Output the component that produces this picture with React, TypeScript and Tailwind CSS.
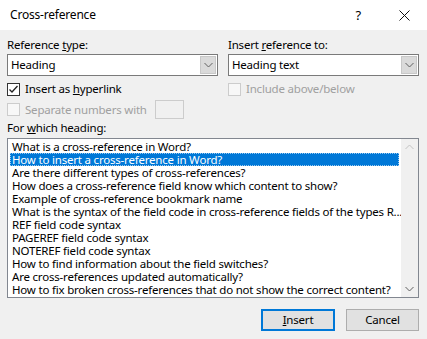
import React from 'react';

const headings = [
  'What is a cross-reference in Word?',
  'How to insert a cross-reference in Word?',
  'Are there different types of cross-references?',
  'How does a cross-reference field know which content to show?',
  'Example of cross-reference bookmark name',
  'What is the syntax of the field code in cross-reference fields of the types R...',
  'REF field code syntax',
  'PAGEREF field code syntax',
  'NOTEREF field code syntax',
  'How to find information about the field switches?',
  'Are cross-references updated automatically?',
  'How to fix broken cross-references that do not show the correct content?',
];

const selectedIndex = 1;

// small grey chevron used by combos and the scrollbar
const Chevron: React.FC<{ up?: boolean }> = ({ up }) => (
  <svg width="9" height="6" viewBox="0 0 9 6" className="block">
    <polyline
      points={up ? '0.5,5 4.5,1 8.5,5' : '0.5,1 4.5,5 8.5,1'}
      fill="none"
      stroke={up ? '#c2c2c2' : '#606060'}
      strokeWidth="1"
    />
  </svg>
);

const Combo: React.FC<{ value: string }> = ({ value }) => (
  <div className="flex h-[22px] items-stretch border border-[#7a7a7a] bg-white">
    <div className="flex flex-1 items-center pl-[3px] text-black">{value}</div>
    <div className="m-[1px] flex w-[16px] items-center justify-center bg-[#dadada] border border-[#c8c8c8]">
      <Chevron />
    </div>
  </div>
);

const CheckBox: React.FC<{ checked?: boolean; disabled?: boolean }> = ({ checked, disabled }) => (
  <div
    className={
      disabled
        ? 'h-[13px] w-[13px] shrink-0 border border-[#cccccc] bg-[#f7f7f7]'
        : 'h-[13px] w-[13px] shrink-0 border border-[#333333] bg-white'
    }
  >
    {checked && (
      <svg width="11" height="11" viewBox="0 0 11 11" className="block">
        <polyline points="1.5,5.5 4,8 9.5,2" fill="none" stroke="#222" strokeWidth="1.3" />
      </svg>
    )}
  </div>
);

export default function App() {
  return (
    <div
      className="flex h-[339px] w-[427px] flex-col bg-[#f0f0f0] text-[11.5px] leading-[14px] tracking-[-0.2px] text-black"
      style={{ fontFamily: '"Segoe UI", "Noto Sans", sans-serif' }}
    >
      {/* title bar */}
      <div className="flex h-[30px] items-center bg-white pl-[10px]">
        <span className="flex-1 text-[12px]">Cross-reference</span>
        <span className="mr-[38px] text-[13px]">?</span>
        <svg width="11" height="11" viewBox="0 0 11 11" className="mr-[17px]">
          <path d="M0.5 0.5 L10.5 10.5 M10.5 0.5 L0.5 10.5" stroke="#111" strokeWidth="1" />
        </svg>
      </div>

      <div className="flex flex-1 flex-col pl-[7px] pr-[8px]">
        {/* top row: two columns */}
        <div className="mt-[8px] flex gap-[10px]">
          <div className="flex w-[211px] flex-col">
            <div className="mb-[2px]">
              Reference <u>t</u>ype:
            </div>
            <Combo value="Heading" />
            <div className="mt-[6px] flex items-center gap-[5px]">
              <CheckBox checked />
              <span>
                Insert as <u>h</u>yperlink
              </span>
            </div>
            <div className="mt-[4px] flex h-[19px] items-center gap-[5px]">
              <CheckBox disabled />
              <span className="text-[#a0a0a0]">Separate numbers with</span>
              <div className="ml-[3px] h-[19px] w-[29px] border border-[#cccccc] bg-[#f0f0f0]" />
            </div>
          </div>
          <div className="flex flex-1 flex-col">
            <div className="mb-[2px]">
              Insert <u>r</u>eference to:
            </div>
            <Combo value="Heading text" />
            <div className="mt-[6px] flex items-center gap-[5px]">
              <CheckBox disabled />
              <span className="text-[#a0a0a0]">Include above/below</span>
            </div>
          </div>
        </div>

        <div className="mt-[2px] mb-[3px]">
          For <u>w</u>hich heading:
        </div>

        {/* list box */}
        <div className="flex h-[160px] border border-[#828790] bg-white">
          <div className="flex min-w-0 flex-1 flex-col overflow-hidden pl-[2px] pt-[1px] pr-[2px]">
            {headings.map((h, i) => (
              <div
                key={h}
                className={
                  i === selectedIndex
                    ? 'h-[13px] whitespace-nowrap border border-dotted border-[#99c9ef] bg-[#0078d7] pl-[1px] leading-[11px] text-white'
                    : 'h-[13px] whitespace-nowrap pl-[2px] leading-[13px]'
                }
              >
                {h}
              </div>
            ))}
          </div>
          <div className="flex w-[17px] flex-col items-center justify-between bg-[#f0f0f0] py-[5px]">
            <Chevron up />
            <Chevron up={false} />
          </div>
        </div>

        {/* buttons */}
        <div className="mt-[11px] flex justify-end gap-[11px]">
          <button className="flex h-[22px] w-[74px] items-center justify-center border-2 border-[#0078d7] bg-[#e1e1e1]">
            <span>
              <u>I</u>nsert
            </span>
          </button>
          <button className="flex h-[22px] w-[73px] items-center justify-center border border-[#adadad] bg-[#e1e1e1]">
            Cancel
          </button>
        </div>
      </div>
    </div>
  );
}
